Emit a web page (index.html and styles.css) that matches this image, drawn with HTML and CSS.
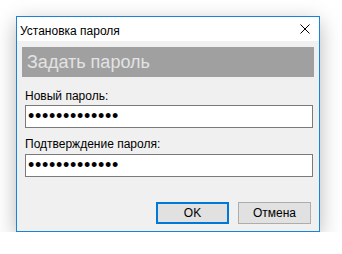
FILE: index.html
```html
<!DOCTYPE html>
<html lang="ru">
<head>
    <meta charset="UTF-8">
    <title>Установка пароля</title>
    <link rel="stylesheet" href="styles.css">
</head>
<body>
    <!-- Окно диалога -->
    <div class="dialog">
        <div class="title-bar">
            <span class="title-text">Установка пароля</span>
            <button class="close-button" aria-label="Закрыть">
                <svg width="10" height="10" viewBox="0 0 10 10">
                    <path d="M0.5 0.5 L9.5 9.5 M9.5 0.5 L0.5 9.5" stroke="#000" stroke-width="1" fill="none"/>
                </svg>
            </button>
        </div>

        <div class="dialog-body">
            <div class="banner">Задать пароль</div>

            <div class="fields">
                <label class="field-label" for="pass1">Новый пароль:</label>
                <input class="field-input" id="pass1" type="password" value="1234567890123" readonly>

                <label class="field-label second" for="pass2">Подтверждение пароля:</label>
                <input class="field-input" id="pass2" type="password" value="1234567890123" readonly>
            </div>

            <div class="buttons">
                <button class="btn btn-default">OK</button>
                <button class="btn">Отмена</button>
            </div>
        </div>
    </div>
</body>
</html>
```

FILE: styles.css
```css
* {
    margin: 0;
    padding: 0;
    box-sizing: border-box;
}

body {
    font-family: "Liberation Sans", Arial, sans-serif;
    font-size: 12px;
    background: #fff;
    color: #000;
    padding: 16px 0 0 16px;
}

/* Окно */
.dialog {
    width: 304px;
    height: 216px;
    border: 1px solid #1883d7;
    background: #f0f0f0;
    box-shadow: 0 6px 20px rgba(0, 0, 0, 0.28);
    display: flex;
    flex-direction: column;
}

.title-bar {
    height: 24px;
    background: #fff;
    display: flex;
    align-items: center;
    justify-content: space-between;
    padding: 0 9px 0 3px;
}

.title-text {
    line-height: 16px;
    padding-top: 3px;
}

.close-button {
    width: 10px;
    height: 10px;
    border: none;
    background: transparent;
    display: flex;
}

.dialog-body {
    flex: 1;
    padding: 6px 5px 0 5px;
    display: flex;
    flex-direction: column;
}

/* Серая плашка */
.banner {
    height: 30px;
    background: #a0a0a0;
    color: #e3e3e3;
    font-size: 18px;
    line-height: 30px;
    padding-left: 5px;
}

.fields {
    display: flex;
    flex-direction: column;
    padding: 11px 1px 0 3px;
}

.field-label {
    line-height: 16px;
    margin-bottom: 1px;
}

.field-label.second {
    margin-top: 8px;
    margin-bottom: 2px;
}

.field-input {
    height: 23px;
    border: 1px solid #7a7a7a;
    background: #fff;
    font-family: "Liberation Sans", Arial, sans-serif;
    font-size: 18px;
    letter-spacing: 0.7px;
    padding: 0 2px;
    outline: none;
}

.buttons {
    display: flex;
    justify-content: flex-end;
    gap: 9px;
    margin-top: 25px;
    padding-right: 3px;
}

.btn {
    width: 73px;
    height: 22px;
    background: #e1e1e1;
    border: 1px solid #adadad;
    font-family: "Liberation Sans", Arial, sans-serif;
    font-size: 12px;
    color: #000;
}

.btn-default {
    border: 2px solid #0078d7;
}
```
